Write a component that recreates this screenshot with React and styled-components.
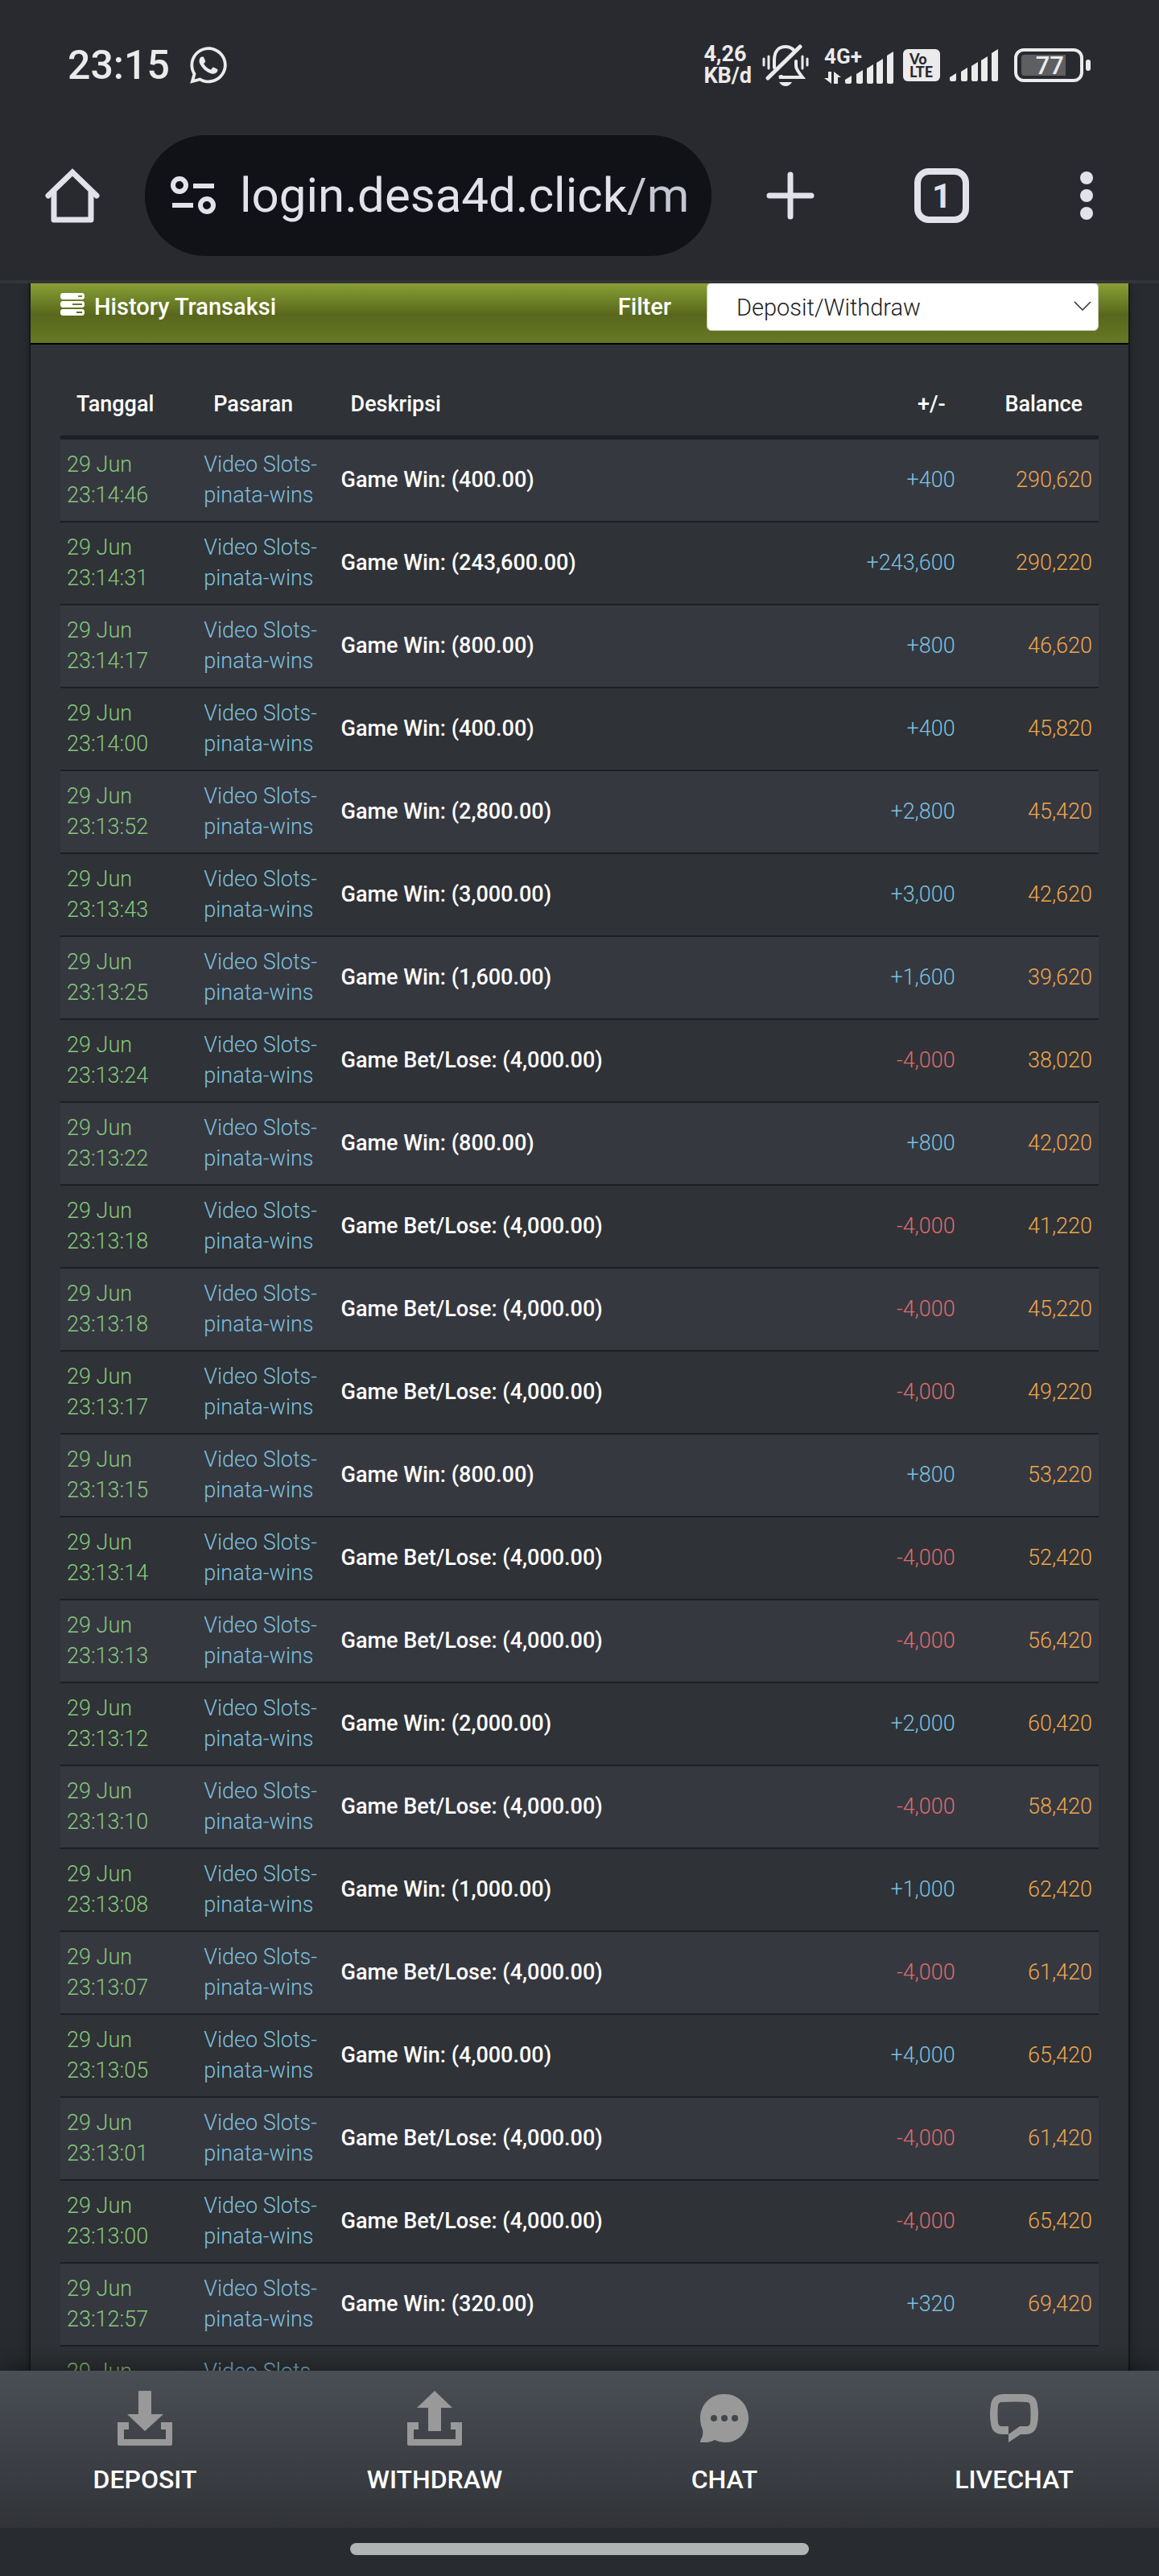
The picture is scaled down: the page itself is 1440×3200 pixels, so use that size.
import React from "react";
import styled, { createGlobalStyle, css } from "styled-components";
import { FaWhatsapp } from "react-icons/fa";

const transactions = [
  ["23:14:46", "win", 400, "290,620"],
  ["23:14:31", "win", 243600, "290,220"],
  ["23:14:17", "win", 800, "46,620"],
  ["23:14:00", "win", 400, "45,820"],
  ["23:13:52", "win", 2800, "45,420"],
  ["23:13:43", "win", 3000, "42,620"],
  ["23:13:25", "win", 1600, "39,620"],
  ["23:13:24", "lose", 4000, "38,020"],
  ["23:13:22", "win", 800, "42,020"],
  ["23:13:18", "lose", 4000, "41,220"],
  ["23:13:18", "lose", 4000, "45,220"],
  ["23:13:17", "lose", 4000, "49,220"],
  ["23:13:15", "win", 800, "53,220"],
  ["23:13:14", "lose", 4000, "52,420"],
  ["23:13:13", "lose", 4000, "56,420"],
  ["23:13:12", "win", 2000, "60,420"],
  ["23:13:10", "lose", 4000, "58,420"],
  ["23:13:08", "win", 1000, "62,420"],
  ["23:13:07", "lose", 4000, "61,420"],
  ["23:13:05", "win", 4000, "65,420"],
  ["23:13:01", "lose", 4000, "61,420"],
  ["23:13:00", "lose", 4000, "65,420"],
  ["23:12:57", "win", 320, "69,420"]
];

const colors = {
  date: "#86c77c",
  plus: "#7cc0df",
  minus: "#dd6b6b",
  balance: "#eda64c"
};

const format = amount => amount.toLocaleString("en-US");

const SignalBars = () => (
  <svg width="60" height="40" viewBox="0 0 60 40" fill="currentColor" aria-hidden="true">
    <path d="M0 35l8-5v8q0 2-2 2H2q-2 0-2-2z" />
    <path d="M14 28l8-5v15q0 2-2 2h-4q-2 0-2-2z" />
    <path d="M27 21l8-5v22q0 2-2 2h-4q-2 0-2-2z" />
    <path d="M39 14l8-5v29q0 2-2 2h-4q-2 0-2-2z" />
    <path d="M52 5l8-5v38q0 2-2 2h-4q-2 0-2-2z" />
  </svg>
);

const MutedBell = () => (
  <svg width="60" height="52" viewBox="0 0 60 52" fill="none" stroke="currentColor" strokeWidth="4" strokeLinecap="round" aria-hidden="true">
    <path d="M16 29V20C16 8 22 3 30 3q6 0 10 4" />
    <path d="M48 3L8 42" strokeWidth="5" />
    <path d="M43 21v6q0 4 8 14H22l3-1" />
    <path d="M3 18v8M9 15v15M51 15v15M57 18v8" strokeWidth="3" />
    <path d="M22 47h16q-3 5-8 5t-8-5z" fill="currentColor" stroke="none" />
  </svg>
);

const DataArrows = () => (
  <svg width="22" height="15" viewBox="0 0 22 15" fill="currentColor" aria-hidden="true">
    <path d="M5 0h4v15L0 8h5zM12 0l9 7h-4v8h-5z" />
  </svg>
);

const HomeIcon = () => (
  <svg width="68" height="68" viewBox="0 0 68 68" fill="none" stroke="currentColor" strokeWidth="7" strokeLinecap="round" strokeLinejoin="round" aria-hidden="true">
    <path d="M4 34L34 5l30 29" strokeLinejoin="miter" />
    <path d="M11 30v34h46V30" />
  </svg>
);

const SiteIcon = () => (
  <svg width="56" height="48" viewBox="0 0 56 48" fill="none" stroke="currentColor" strokeWidth="6" aria-hidden="true">
    <circle cx="11" cy="11" r="8" />
    <circle cx="45" cy="36" r="8" />
    <path d="M28 12h26M2 36h26" />
  </svg>
);

const PlusIcon = () => (
  <svg width="60" height="60" viewBox="0 0 60 60" stroke="currentColor" strokeWidth="7" strokeLinecap="round" aria-hidden="true">
    <path d="M30 4v52M4 30h52" />
  </svg>
);

const MenuIcon = () => (
  <svg width="30" height="60" viewBox="0 0 30 60" fill="currentColor" aria-hidden="true">
    <circle cx="22" cy="8" r="8" />
    <circle cx="22" cy="30" r="8" />
    <circle cx="22" cy="52" r="8" />
  </svg>
);

const HistoryIcon = () => (
  <svg width="30" height="34" viewBox="0 0 30 34" fill="currentColor" aria-hidden="true">
    <path
      fillRule="evenodd"
      d="M2 0h26l2 2v4l-2 2H2L0 6V2zM22 3v2h5V3zM2 10h26l2 2v4l-2 2H2l-2-2v-4zM15 13v2h12v-2zM2 20h26l2 2v4l-2 2H2l-2-2v-4zM20 23v2h7v-2z"
    />
  </svg>
);

const Tray = () => <path d="M0 39h14v9H8v12h52V48h-6v-9h14v27q0 2-2 2H2q-2 0-2-2z" />;

const navItems = [
  {
    label: "DEPOSIT",
    icon: (
      <svg width="68" height="68" viewBox="0 0 68 68" aria-hidden="true">
        <Tray />
        <path d="M26 0h16v29h15L34 50 12 29h14z" />
      </svg>
    )
  },
  {
    label: "WITHDRAW",
    icon: (
      <svg width="68" height="68" viewBox="0 0 68 68" aria-hidden="true">
        <Tray />
        <path d="M34 0l22 21H42v29H26V21H12z" />
      </svg>
    )
  },
  {
    label: "CHAT",
    icon: (
      <svg width="60" height="60" viewBox="0 0 60 60" aria-hidden="true">
        <path
          fillRule="evenodd"
          d="M30 0C47 0 60 13 60 30S47 60 32 60q-8 0-14-3-7 4-18 3 0-3 2-6 2-4 1-10Q0 38 0 30C0 13 13 0 30 0zM17 26a4 4 0 1 0 0 8 4 4 0 0 0 0-8zm13 0a4 4 0 1 0 0 8 4 4 0 0 0 0-8zm13 0a4 4 0 1 0 0 8 4 4 0 0 0 0-8z"
        />
      </svg>
    )
  },
  {
    label: "LIVECHAT",
    icon: (
      <svg width="60" height="60" viewBox="0 0 60 60" aria-hidden="true">
        <path
          fillRule="evenodd"
          d="M16 0Q30-1 44 0q14 1 15 14 2 11 0 22-2 14-15 14h-6L23 60V50h-7Q2 50 1 36-1 25 1 14 2 1 16 0zM14 10q-3 0-4 4-1 11 0 22 1 4 4 4h9v10l14-10h9q3 0 4-4 1-11 0-22-1-4-4-4-16-1-32 0z"
        />
      </svg>
    )
  }
];

const App = () => (
  <Screen>
    <GlobalStyle />
    <StatusBar>
      <Clock>23:15</Clock>
      <FaWhatsapp size={52} />
      <StatusIcons>
        <NetSpeed>
          <span>4,26</span>
          <span>KB/d</span>
        </NetSpeed>
        <MutedBell />
        <MobileData>
          <DataType>
            4G+
            <DataArrows />
          </DataType>
          <SignalBars />
        </MobileData>
        <Volte>
          <span>Vo</span>
          <span>LTE</span>
        </Volte>
        <SignalBars />
        <Battery>
          <BatteryLevel>77</BatteryLevel>
        </Battery>
      </StatusIcons>
    </StatusBar>

    <BrowserBar>
      <BarButton aria-label="Home">
        <HomeIcon />
      </BarButton>
      <AddressBar href="#">
        <SiteIcon />
        <Url>
          login.desa4d.click<span>/m</span>
        </Url>
      </AddressBar>
      <BarActions>
        <BarButton aria-label="New tab">
          <PlusIcon />
        </BarButton>
        <BarButton aria-label="Tabs">
          <TabCount>1</TabCount>
        </BarButton>
        <BarButton aria-label="Menu">
          <MenuIcon />
        </BarButton>
      </BarActions>
    </BrowserBar>

    <Content>
      <Panel>
        <PanelHeader>
          <HistoryIcon />
          <Title>History Transaksi</Title>
          <FilterLabel htmlFor="filter">Filter</FilterLabel>
          <SelectBox>
            <Select id="filter" defaultValue="dw">
              <option value="dw">Deposit/Withdraw</option>
            </Select>
            <svg width="22" height="12" viewBox="0 0 22 12" fill="none" stroke="#333" strokeWidth="1.5" aria-hidden="true">
              <path d="M1 1l10 10L21 1" />
            </svg>
          </SelectBox>
        </PanelHeader>
        <PanelBody>
          <Table>
            <colgroup>
              <Col $width="13.2%" />
              <Col $width="13.2%" />
              <Col />
              <Col $width="13.2%" />
              <Col $width="13.2%" />
            </colgroup>
            <thead>
              <tr>
                <Th>Tanggal</Th>
                <Th>Pasaran</Th>
                <Th>Deskripsi</Th>
                <Th $right>+/-</Th>
                <Th $right>Balance</Th>
              </tr>
            </thead>
            <tbody>
              {transactions.map(([time, type, amount, balance], i) => (
                <Row key={i}>
                  <Td $color={colors.date}>
                    29 Jun
                    <br />
                    {time}
                  </Td>
                  <Td $color={colors.plus}>
                    Video Slots-
                    <br />
                    pinata-wins
                  </Td>
                  <Td $strong>
                    {type === "win" ? "Game Win" : "Game Bet/Lose"}: ({format(amount)}.00)
                  </Td>
                  <Td $right $color={type === "win" ? colors.plus : colors.minus}>
                    {type === "win" ? "+" : "-"}
                    {format(amount)}
                  </Td>
                  <Td $right $color={colors.balance}>
                    {balance}
                  </Td>
                </Row>
              ))}
              <Row>
                <Td $color={colors.date}>29 Jun</Td>
                <Td $color={colors.plus}>Video Slots-</Td>
                <Td />
                <Td />
                <Td />
              </Row>
            </tbody>
          </Table>
        </PanelBody>
      </Panel>
    </Content>

    <BottomNav>
      {navItems.map(({ label, icon }) => (
        <NavLink href="#" key={label}>
          <NavIcon>{icon}</NavIcon>
          {label}
        </NavLink>
      ))}
    </BottomNav>
    <GestureBar>
      <GestureHandle />
    </GestureBar>
  </Screen>
);

const GlobalStyle = createGlobalStyle`
  * {
    box-sizing: border-box;
  }
  body {
    margin: 0;
    background-color: #282a2f;
    font-family: Roboto, "Liberation Sans", sans-serif;
  }
  svg {
    flex: none;
  }
`;

const Screen = styled.div`
  display: flex;
  flex-direction: column;
  height: 100vh;
  overflow: hidden;
`;

const StatusBar = styled.header`
  display: flex;
  align-items: center;
  gap: 22px;
  flex: none;
  height: 162px;
  padding: 0 94px 0 84px;
  background-color: #292a2f;
  color: #ebebeb;
`;

const Clock = styled.span`
  font-size: 50px;
  font-weight: 500;
`;

const StatusIcons = styled.div`
  display: flex;
  align-items: center;
  gap: 12px;
  margin-left: auto;
`;

const NetSpeed = styled.div`
  display: flex;
  flex-direction: column;
  font-size: 27px;
  line-height: 27px;
  font-weight: 700;
`;

const MobileData = styled.div`
  display: flex;
  align-items: flex-end;
  margin-left: 6px;
`;

const DataType = styled.div`
  display: flex;
  flex-direction: column;
  gap: 8px;
  width: 26px;
  font-size: 26px;
  line-height: 22px;
  font-weight: 700;
  white-space: nowrap;
`;

const Volte = styled.div`
  display: flex;
  flex-direction: column;
  justify-content: center;
  width: 46px;
  height: 40px;
  padding-left: 8px;
  border-radius: 6px;
  background-color: #ebebeb;
  color: #292a2f;
  font-family: Lato, sans-serif;
  font-size: 18px;
  line-height: 16px;
  font-weight: 900;
`;

const Battery = styled.div`
  position: relative;
  width: 86px;
  height: 42px;
  margin-left: 8px;
  padding: 4px 18px 4px 5px;
  border: 4px solid #ebebeb;
  border-radius: 12px;
  &::after {
    content: "";
    position: absolute;
    top: 10px;
    right: -13px;
    width: 6px;
    height: 14px;
    border-radius: 3px;
    background-color: #ebebeb;
  }
`;

const BatteryLevel = styled.div`
  height: 26px;
  padding-right: 2px;
  border-radius: 4px 0 0 4px;
  background-color: #5d5f62;
  font-size: 31px;
  line-height: 27px;
  font-weight: 500;
  text-align: right;
`;

const BrowserBar = styled.nav`
  display: flex;
  align-items: center;
  flex: none;
  gap: 56px;
  height: 190px;
  padding: 0 82px 24px 56px;
  border-bottom: 4px solid #333438;
  background-color: #292a2f;
  color: #e3e1e9;
`;

const BarButton = styled.button`
  display: flex;
  padding: 0;
  border: 0;
  background: none;
  color: inherit;
  font-family: inherit;
`;

const AddressBar = styled.a`
  display: flex;
  align-items: center;
  flex: 1;
  gap: 30px;
  height: 150px;
  padding: 0 32px;
  border-radius: 75px;
  background-color: #111218;
  color: inherit;
  text-decoration: none;
  overflow: hidden;
`;

const Url = styled.span`
  font-size: 60px;
  line-height: 72px;
  white-space: nowrap;
  & span {
    color: #c4c6d0;
  }
`;

const BarActions = styled.div`
  display: flex;
  align-items: center;
  gap: 124px;
  margin-left: 12px;
`;

const TabCount = styled.span`
  display: flex;
  align-items: center;
  justify-content: center;
  width: 68px;
  height: 68px;
  border: 8px solid #e3e1e9;
  border-radius: 18px;
  font-size: 42px;
  font-weight: 700;
`;

const Content = styled.main`
  flex: 1;
  min-height: 0;
  padding: 0 38px;
  overflow: hidden;
  background-color: #282b2f;
`;

const Panel = styled.section`
  background-color: #2f3236;
  box-shadow: 0 0 0 2px #16181b, 0 0 12px rgba(0, 0, 0, 0.4);
`;

const PanelHeader = styled.div`
  display: flex;
  align-items: center;
  height: 76px;
  padding: 0 37px 16px;
  border-bottom: 2px solid #000;
  background: linear-gradient(#88a035 0%, #58671c 53%, #677825 100%);
  color: #fff;
`;

const Title = styled.h1`
  margin: 0 auto 0 12px;
  font-size: 29px;
  line-height: 34px;
  font-weight: 500;
`;

const FilterLabel = styled.label`
  margin-right: 44px;
  font-size: 29px;
  line-height: 34px;
  font-weight: 500;
`;

const SelectBox = styled.div`
  position: relative;
  width: 487px;
  & svg {
    position: absolute;
    top: 23px;
    right: 9px;
    pointer-events: none;
  }
`;

const Select = styled.select`
  display: block;
  appearance: none;
  width: 100%;
  height: 60px;
  padding: 2px 36px 0;
  border: 1px solid #c5c9b4;
  border-radius: 6px;
  background-color: #fff;
  color: #222;
  font-family: inherit;
  font-size: 29px;
  font-weight: 300;
`;

const PanelBody = styled.div`
  padding: 36px 37px;
`;

const Table = styled.table`
  width: 100%;
  table-layout: fixed;
  border-collapse: separate;
  border-spacing: 0;
  font-size: 27px;
  line-height: 38px;
`;

const Col = styled.col`
  width: ${props => props.$width || "auto"};
`;

const cell = css`
  text-align: ${props => (props.$right ? "right" : "left")};
  font-weight: ${props => (props.$strong ? 500 : 300)};
`;

const Th = styled.th`
  ${cell}
  padding: 19px 20px 20px;
  border-bottom: 5px solid #1d1f22;
  color: #fff;
  font-weight: 500;
`;

const Td = styled.td`
  ${cell}
  padding: 12px 8px 13px;
  border-bottom: 2px solid #1d1f22;
  color: ${props => props.$color || "#fff"};
`;

const Row = styled.tr`
  &:nth-child(odd) {
    background-color: #363840;
  }
`;

const BottomNav = styled.nav`
  display: grid;
  grid-template-columns: repeat(4, 1fr);
  flex: none;
  position: relative;
  height: 195px;
  background: linear-gradient(#4a4f55, #313338);
  box-shadow: 0 0 36px rgba(0, 0, 0, 0.6);
`;

const NavLink = styled.a`
  display: flex;
  flex-direction: column;
  align-items: center;
  gap: 24px;
  padding-top: 25px;
  color: #fff;
  font-size: 32px;
  line-height: 36px;
  font-weight: 500;
  text-decoration: none;
`;

const NavIcon = styled.span`
  display: flex;
  align-items: center;
  height: 68px;
  & svg {
    fill: #999;
  }
`;

const GestureBar = styled.footer`
  display: flex;
  justify-content: center;
  flex: none;
  position: relative;
  height: 60px;
  padding-top: 19px;
  background-color: #282b2f;
`;

const GestureHandle = styled.div`
  width: 570px;
  height: 15px;
  border-radius: 8px;
  background-color: #b2b3b4;
`;

export default App;
